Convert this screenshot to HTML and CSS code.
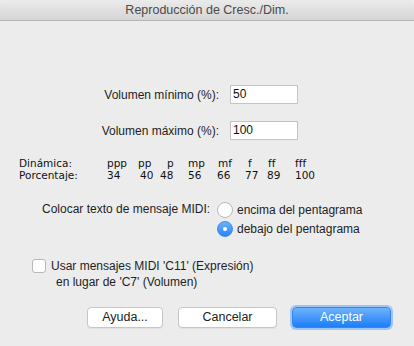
FILE: index.html
```html
<!DOCTYPE html>
<html lang="es">
<head>
<meta charset="utf-8">
<link rel="stylesheet" href="styles.css">
</head>
<body>
<div class="window">
  <div class="titlebar">Reproducción de Cresc./Dim.</div>
  <div class="content">
    <div class="field-row first">
      <label class="field-label">Volumen mínimo (%):</label>
      <div class="textbox">50</div>
    </div>
    <div class="field-row second">
      <label class="field-label">Volumen máximo (%):</label>
      <div class="textbox">100</div>
    </div>
    <div class="dyn">
      <span class="dl">Dinámica:</span>
      <span>ppp</span><span>pp</span><span class="o7">p</span><span>mp</span><span class="o1">mf</span><span class="o3">f</span><span class="o1">ff</span><span>fff</span>
      <span class="dl">Porcentaje:</span>
      <span>34</span><span class="o2">40</span><span>48</span><span>56</span><span>66</span><span>77</span><span>89</span><span>100</span>
    </div>
    <div class="radio-group">
      <div class="radio-label">Colocar texto de mensaje MIDI:</div>
      <div class="radios">
        <div class="radio-row"><span class="radio"></span><span>encima del pentagrama</span></div>
        <div class="radio-row"><span class="radio on"></span><span>debajo del pentagrama</span></div>
      </div>
    </div>
    <div class="check">
      <div class="check-row"><span class="checkbox"></span><span>Usar mensajes MIDI 'C11' (Expresión)</span></div>
      <div class="check-sub">en lugar de 'C7' (Volumen)</div>
    </div>
    <div class="buttons">
      <div class="btn help">Ayuda...</div>
      <div class="btn cancel">Cancelar</div>
      <div class="btn primary">Aceptar</div>
    </div>
  </div>
</div>
</body>
</html>
```
FILE: styles.css
```css
html, body {
  margin: 0;
  padding: 0;
  width: 414px;
  height: 346px;
  overflow: hidden;
  background: #ececec;
}
.window {
  width: 414px;
  height: 346px;
  background: #ececec;
  font-family: "Liberation Sans", Arial, sans-serif;
  font-size: 12px;
  color: #1e1e1e;
  border-radius: 5px 5px 0 0;
  overflow: hidden;
}
.titlebar {
  height: 21px;
  line-height: 21px;
  text-align: center;
  background: linear-gradient(#ebebeb, #d5d5d5);
  border-bottom: 1px solid #b4b4b4;
  box-sizing: border-box;
  color: #4a4a4a;
  font-size: 12.5px;
}
.content {
  display: flex;
  flex-direction: column;
}
.field-row {
  display: flex;
  align-items: center;
  height: 19px;
}
.field-row.first { margin-top: 64px; }
.field-row.second { margin-top: 17px; }
.field-label {
  width: 219px;
  text-align: right;
  margin-right: 11px;
}
.textbox {
  width: 68px;
  height: 19px;
  box-sizing: border-box;
  background: #fff;
  border: 1px solid #c4c4c4;
  padding-left: 2px;
  line-height: 17px;
  color: #111;
}
.dyn {
  margin-top: 17px;
  margin-left: 19px;
  display: grid;
  grid-template-columns: 88px 31px 22px 28px 29px 28px 22px 28px 40px;
  font-family: "DejaVu Sans", Verdana, sans-serif;
  font-size: 10.5px;
  line-height: 12px;
  color: #111;
}
.dyn .o1 { padding-left: 1px; }
.dyn .o2 { padding-left: 2px; }
.dyn .o3 { padding-left: 3px; }
.dyn .o7 { padding-left: 7px; }
.radio-group {
  margin-top: 19px;
  display: flex;
  margin-left: 42px;
}
.radio-label {
  width: 175px;
  line-height: 19px;
  white-space: nowrap;
}
.radios {
  display: flex;
  flex-direction: column;
}
.radio-row {
  display: flex;
  align-items: center;
  height: 19px;
}
.radio {
  width: 16px;
  height: 16px;
  box-sizing: border-box;
  border-radius: 50%;
  background: #fff;
  border: 1px solid #b8b8b8;
  margin-right: 4px;
  position: relative;
}
.radio.on {
  background: linear-gradient(#6cb1fb, #2a84f8);
  border-color: #3b8cf2;
}
.radio.on::after {
  content: "";
  position: absolute;
  left: 5px;
  top: 5px;
  width: 4px;
  height: 4px;
  border-radius: 50%;
  background: #fff;
}
.check {
  margin-top: 19px;
  margin-left: 32px;
}
.check-row {
  display: flex;
  align-items: center;
  height: 17px;
}
.checkbox {
  width: 14px;
  height: 14px;
  box-sizing: border-box;
  border: 1px solid #b8b8b8;
  border-radius: 3px;
  background: #fff;
  margin-right: 5px;
}
.check-sub {
  margin-left: 24px;
  line-height: 17px;
}
.buttons {
  margin-top: 15px;
  display: flex;
  align-items: center;
  height: 22px;
}
.btn {
  box-sizing: border-box;
  height: 21px;
  line-height: 19px;
  text-align: center;
  background: #fff;
  border: 1px solid #c6c6c6;
  border-radius: 4px;
  color: #222;
  font-size: 12.5px;
  box-shadow: 0 1px 0 rgba(0,0,0,0.05);
}
.btn.help { margin-left: 87px; width: 76px; }
.btn.cancel { margin-left: 15px; width: 99px; }
.btn.primary {
  margin-left: 15px;
  width: 99px;
  background: linear-gradient(#6fb2fb, #1c7ef9);
  border-color: #3b84ea;
  color: #fff;
  box-shadow: 0 0 0 2px #9cc6f6;
}
```
